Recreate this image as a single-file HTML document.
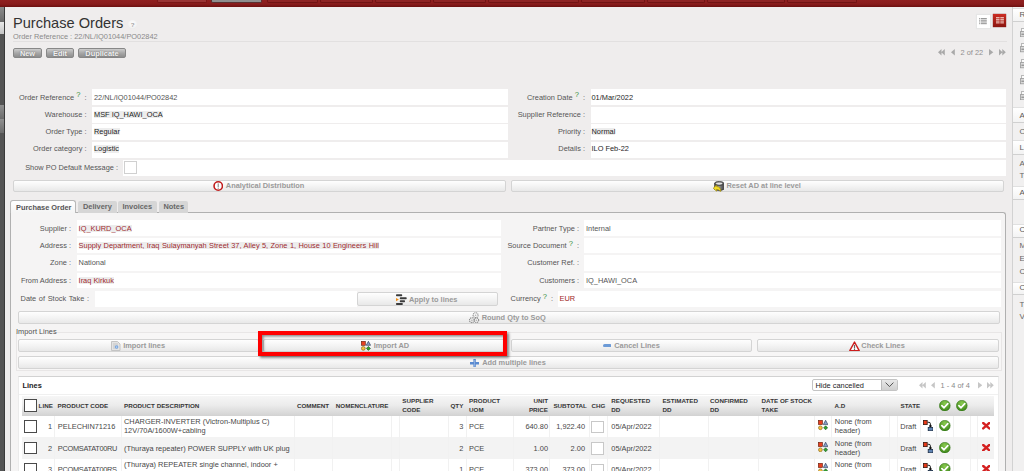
<!DOCTYPE html>
<html><head><meta charset="utf-8">
<style>
*{box-sizing:border-box;margin:0;padding:0}
html,body{width:1024px;height:471px;overflow:hidden;background:#efeded;font-family:"Liberation Sans",sans-serif;font-size:7.4px;color:#555;position:relative}
.a{position:absolute;display:block}
.t{position:absolute;white-space:nowrap;line-height:1;color:#555}
.btxt{position:absolute;white-space:nowrap;line-height:1;font-weight:bold;color:#9a9a9a;margin-top:0.7px}
.btn{position:absolute;border:1px solid #d4d4d4;border-radius:2px;background:linear-gradient(#fefefe,#f4f4f4 50%,#e8e8e8)}
.gbtn{position:absolute;border:1px solid #888;border-radius:2px;background:linear-gradient(#cdcdcd,#a8a8a8 50%,#8e8e8e);color:#f0f0f0;font-weight:bold;text-align:center;line-height:9.6px;font-size:7.4px;text-shadow:0 0 1.5px #666}
.q{color:#33903a;font-size:7.6px;position:relative;top:-2.5px;margin:0 2px 0 0}
.th{position:absolute;white-space:nowrap;line-height:1;font-weight:bold;color:#363636}
.td{position:absolute;white-space:nowrap;line-height:1;color:#474747}
.cb{width:12.5px;height:12.8px;border:1.2px solid #3c3c3c;background:#fff}
.cb2{width:12.2px;height:12.5px;border:1px solid #c8c8c8;background:#fff}
</style></head><body>
<div class="a" style="left:0px;top:0px;width:1024px;height:7px;background:linear-gradient(#902020,#881c1c 60%,#6c1010)"></div>
<div class="a" style="left:157px;top:0px;width:50px;height:2.6px;background:#9a3535;border:0.6px solid #7a1818;border-top:none;border-radius:0 0 2px 2px"></div>
<div class="a" style="left:211px;top:0px;width:51px;height:2.8px;background:#8e8e8e;border:0.6px solid #5a3030;border-top:none;border-radius:0 0 2px 2px"></div>
<div class="a" style="left:267px;top:0px;width:51px;height:2.6px;background:#8e2424;border:0.6px solid #701414;border-top:none;border-radius:0 0 2px 2px"></div>
<div class="a" style="left:320px;top:0px;width:53px;height:2.6px;background:#8e2424;border:0.6px solid #701414;border-top:none;border-radius:0 0 2px 2px"></div>
<div class="a" style="left:375px;top:0px;width:56px;height:2.6px;background:#8e2424;border:0.6px solid #701414;border-top:none;border-radius:0 0 2px 2px"></div>
<div class="a" style="left:433px;top:0px;width:53px;height:2.6px;background:#8e2424;border:0.6px solid #701414;border-top:none;border-radius:0 0 2px 2px"></div>
<div class="a" style="left:488px;top:0px;width:91px;height:2.6px;background:#8e2424;border:0.6px solid #701414;border-top:none;border-radius:0 0 2px 2px"></div>
<div class="a" style="left:581px;top:0px;width:63.5px;height:2.6px;background:#8e2424;border:0.6px solid #701414;border-top:none;border-radius:0 0 2px 2px"></div>
<div class="a" style="left:646.5px;top:0px;width:58.0px;height:2.6px;background:#8e2424;border:0.6px solid #701414;border-top:none;border-radius:0 0 2px 2px"></div>
<div class="a" style="left:706.5px;top:0px;width:78.0px;height:2.6px;background:#8e2424;border:0.6px solid #701414;border-top:none;border-radius:0 0 2px 2px"></div>
<div class="a" style="left:786.5px;top:0px;width:70.5px;height:2.6px;background:#8e2424;border:0.6px solid #701414;border-top:none;border-radius:0 0 2px 2px"></div>
<div class="a" style="left:0px;top:7px;width:3.6px;height:464px;background:#545454"></div>
<div class="a" style="left:0px;top:7px;width:3.6px;height:15px;background:linear-gradient(#8a8a8a,#6a6a6a)"></div>
<div class="a" style="left:0px;top:22px;width:3.6px;height:12px;background:linear-gradient(#e8e8e8,#c4c4c4)"></div>
<div class="a" style="left:0px;top:105.3px;width:3.6px;height:13.5px;background:linear-gradient(#909090,#6c6c6c)"></div>
<div class="a" style="left:0px;top:119.3px;width:3.6px;height:13.4px;background:linear-gradient(#909090,#6c6c6c)"></div>
<div class="a" style="left:3.6px;top:7px;width:0.9px;height:464px;background:#3a3a3a"></div>
<div class="a" style="left:1012px;top:7px;width:1px;height:464px;background:#d2d2d2"></div>
<div class="a" style="left:1013px;top:7px;width:11px;height:464px;background:#f1f0f0"></div>
<div class="a" style="left:1013px;top:7.8px;width:11px;height:14.599999999999998px;background:linear-gradient(#fff,#f3f3f3);border-top:1px solid #e0e0e0;border-bottom:1px solid #d0d0d0"></div>
<div class="t" style="left:1019.5px;top:11.33px;font-size:8px;color:#5a5a5a">R</div>
<svg class="a" style="left:1019.5px;top:27.5px" width="4.5" height="9.5" viewBox="0 0 4.5 9.5"><rect x="1.6" y="0.5" width="3" height="3.6" fill="#fafafa" stroke="#aaa" stroke-width=".8"/><rect x="0.5" y="3.6" width="4" height="5.2" fill="#d8d8d8" stroke="#999" stroke-width=".8"/><rect x="1.4" y="5.6" width="3" height="1.4" fill="#999"/></svg>
<svg class="a" style="left:1019.5px;top:43.4px" width="4.5" height="9.5" viewBox="0 0 4.5 9.5"><rect x="1.6" y="0.5" width="3" height="3.6" fill="#fafafa" stroke="#aaa" stroke-width=".8"/><rect x="0.5" y="3.6" width="4" height="5.2" fill="#d8d8d8" stroke="#999" stroke-width=".8"/><rect x="1.4" y="5.6" width="3" height="1.4" fill="#999"/></svg>
<svg class="a" style="left:1019.5px;top:59.2px" width="4.5" height="9.5" viewBox="0 0 4.5 9.5"><rect x="1.6" y="0.5" width="3" height="3.6" fill="#fafafa" stroke="#aaa" stroke-width=".8"/><rect x="0.5" y="3.6" width="4" height="5.2" fill="#d8d8d8" stroke="#999" stroke-width=".8"/><rect x="1.4" y="5.6" width="3" height="1.4" fill="#999"/></svg>
<svg class="a" style="left:1019.5px;top:75px" width="4.5" height="9.5" viewBox="0 0 4.5 9.5"><rect x="1.6" y="0.5" width="3" height="3.6" fill="#fafafa" stroke="#aaa" stroke-width=".8"/><rect x="0.5" y="3.6" width="4" height="5.2" fill="#d8d8d8" stroke="#999" stroke-width=".8"/><rect x="1.4" y="5.6" width="3" height="1.4" fill="#999"/></svg>
<svg class="a" style="left:1019.5px;top:90.8px" width="4.5" height="9.5" viewBox="0 0 4.5 9.5"><rect x="1.6" y="0.5" width="3" height="3.6" fill="#fafafa" stroke="#aaa" stroke-width=".8"/><rect x="0.5" y="3.6" width="4" height="5.2" fill="#d8d8d8" stroke="#999" stroke-width=".8"/><rect x="1.4" y="5.6" width="3" height="1.4" fill="#999"/></svg>
<div class="a" style="left:1013px;top:106.5px;width:11px;height:16.400000000000006px;background:linear-gradient(#fff,#f3f3f3);border-top:1px solid #e0e0e0;border-bottom:1px solid #d0d0d0"></div>
<div class="t" style="left:1019.5px;top:111.83px;font-size:8px;color:#5a5a5a">A</div>
<div class="t" style="left:1019.5px;top:127.53px;font-size:8px;color:#666">O</div>
<div class="a" style="left:1013px;top:140.4px;width:11px;height:14.799999999999983px;background:linear-gradient(#fff,#f3f3f3);border-top:1px solid #e0e0e0;border-bottom:1px solid #d0d0d0"></div>
<div class="t" style="left:1019.5px;top:144.13px;font-size:8px;color:#5a5a5a">L</div>
<div class="t" style="left:1019.5px;top:159.73px;font-size:8px;color:#666">A</div>
<div class="t" style="left:1019.5px;top:172.43px;font-size:8px;color:#666">T</div>
<div class="a" style="left:1013px;top:185.6px;width:11px;height:14.599999999999994px;background:linear-gradient(#fff,#f3f3f3);border-top:1px solid #e0e0e0;border-bottom:1px solid #d0d0d0"></div>
<div class="t" style="left:1019.5px;top:189.13px;font-size:8px;color:#5a5a5a">A</div>
<div class="a" style="left:1013px;top:223.5px;width:11px;height:14.0px;background:linear-gradient(#fff,#f3f3f3);border-top:1px solid #e0e0e0;border-bottom:1px solid #d0d0d0"></div>
<div class="t" style="left:1019.5px;top:226.43px;font-size:8px;color:#5a5a5a">C</div>
<div class="t" style="left:1019.5px;top:242.23px;font-size:8px;color:#666">M</div>
<div class="t" style="left:1019.5px;top:255.23px;font-size:8px;color:#666">E</div>
<div class="t" style="left:1019.5px;top:267.73px;font-size:8px;color:#666">C</div>
<div class="a" style="left:1013px;top:281.5px;width:11px;height:13.5px;background:linear-gradient(#fff,#f3f3f3);border-top:1px solid #e0e0e0;border-bottom:1px solid #d0d0d0"></div>
<div class="t" style="left:1019.5px;top:283.93px;font-size:8px;color:#5a5a5a">O</div>
<div class="t" style="left:1019.5px;top:300.63px;font-size:8px;color:#666">T</div>
<div class="t" style="left:1019.5px;top:313.03px;font-size:8px;color:#666">V</div>
<div class="t" style="left:13px;top:16.14px;font-size:14.6px;color:#333">Purchase Orders</div>
<div class="a" style="left:127.8px;top:20px;width:9.6px;height:8.8px;border-radius:50%;background:radial-gradient(circle at 50% 40%,#fdfdfd,#f2f2f2 60%,#dedede)"></div>
<div class="t" style="left:130.8px;top:21.55px;font-size:6.2px;color:#a0a0a0;font-weight:bold">?</div>
<div class="t" style="left:13px;top:32.94px;font-size:7.4px;color:#8a8a8a">Order Reference : 22/NL/IQ01044/PO02842</div>
<div class="a" style="left:13px;top:41px;width:994px;height:1px;background:#e2e0e0"></div>
<div class="gbtn" style="left:13px;top:48.1px;width:29px;height:10.4px">New</div>
<div class="gbtn" style="left:46px;top:48.1px;width:28px;height:10.4px">Edit</div>
<div class="gbtn" style="left:78px;top:48.1px;width:48px;height:10.4px">Duplicate</div>
<div class="a" style="left:976.6px;top:14.9px;width:13.3px;height:12.7px;background:#fff;box-shadow:0 0 1px 1px #e6e6e6"></div>
<svg class="a" style="left:979px;top:18px" width="8" height="7" viewBox="0 0 8 7"><rect x="0" y="0.0" width="1.2" height="1.1" fill="#aaa"/><rect x="1.8" y="0.0" width="6" height="1.1" fill="#9a9a9a"/><rect x="0" y="1.7" width="1.2" height="1.1" fill="#aaa"/><rect x="1.8" y="1.7" width="6" height="1.1" fill="#9a9a9a"/><rect x="0" y="3.4" width="1.2" height="1.1" fill="#aaa"/><rect x="1.8" y="3.4" width="6" height="1.1" fill="#9a9a9a"/><rect x="0" y="5.1" width="1.2" height="1.1" fill="#aaa"/><rect x="1.8" y="5.1" width="6" height="1.1" fill="#9a9a9a"/></svg>
<div class="a" style="left:993.2px;top:14.1px;width:13.3px;height:12.8px;background:linear-gradient(#cc2c22,#8a1510);box-shadow:0 0 1px #600"></div>
<svg class="a" style="left:996px;top:17px" width="8" height="7" viewBox="0 0 8 7"><rect x="0" y="0.0" width="3.6" height="1.2" fill="#eab8b0"/><rect x="4.3" y="0.0" width="3.6" height="1.2" fill="#eab8b0"/><rect x="0" y="1.75" width="3.6" height="1.2" fill="#eab8b0"/><rect x="4.3" y="1.75" width="3.6" height="1.2" fill="#eab8b0"/><rect x="0" y="3.5" width="3.6" height="1.2" fill="#eab8b0"/><rect x="4.3" y="3.5" width="3.6" height="1.2" fill="#eab8b0"/><rect x="0" y="5.25" width="3.6" height="1.2" fill="#eab8b0"/><rect x="4.3" y="5.25" width="3.6" height="1.2" fill="#eab8b0"/></svg>
<svg class="a" style="left:938.2px;top:49.3px" width="7" height="6.4" viewBox="0 0 7 6.4"><path d="M0 3.2 L3.5 0 V6.4Z M3.3 3.2 L6.8 0 V6.4Z" fill="#a9a9a9"/></svg>
<svg class="a" style="left:950.5px;top:49.3px" width="4" height="6.4" viewBox="0 0 4 6.4"><path d="M0 3.2 L3.8 0 V6.4Z" fill="#a9a9a9"/></svg>
<div class="t" style="left:960.5px;top:48.94px;font-size:7.4px;color:#8f8f8f">2 of 22</div>
<svg class="a" style="left:989px;top:49.3px" width="4.5" height="6.4" viewBox="0 0 4.5 6.4"><path d="M4.3 3.2 L0 0 V6.4Z" fill="#a9a9a9"/></svg>
<svg class="a" style="left:998.6px;top:49.3px" width="7" height="6.4" viewBox="0 0 7 6.4"><path d="M3.5 3.2 L0 0 V6.4Z M6.8 3.2 L3.3 0 V6.4Z" fill="#a9a9a9"/></svg>
<div class="a" style="left:92px;top:89px;width:416px;height:16px;background:#fff"></div>
<div class="a" style="left:590.5px;top:89px;width:415.5px;height:16px;background:#fff"></div>
<div class="a" style="left:92px;top:106.6px;width:416px;height:16px;background:#fff"></div>
<div class="a" style="left:590.5px;top:106.6px;width:415.5px;height:16px;background:#fff"></div>
<div class="a" style="left:92px;top:124px;width:416px;height:16px;background:#fff"></div>
<div class="a" style="left:590.5px;top:124px;width:415.5px;height:16px;background:#fff"></div>
<div class="a" style="left:92px;top:141.5px;width:416px;height:16px;background:#fff"></div>
<div class="a" style="left:590.5px;top:141.5px;width:415.5px;height:16px;background:#fff"></div>
<div class="a" style="left:123px;top:159.5px;width:883px;height:16px;background:#fff"></div>
<div class="t" style="right:937.5px;top:93.74px;font-size:7.4px;text-align:right;">Order Reference <span class="q">?</span> :</div>
<div class="t" style="right:937.5px;top:110.74px;font-size:7.4px;text-align:right;">Warehouse :</div>
<div class="t" style="right:937.5px;top:128.04px;font-size:7.4px;text-align:right;">Order Type :</div>
<div class="t" style="right:937.5px;top:145.34px;font-size:7.4px;text-align:right;">Order category :</div>
<div class="t" style="right:906px;top:163.94px;font-size:7.4px;text-align:right;">Show PO Default Message :</div>
<div class="a" style="left:124px;top:161px;width:13px;height:13px;border:1px solid #d0d0d0;background:#fff"></div>
<div class="t" style="left:94px;top:93.74px;font-size:7.4px;color:#555">22/NL/IQ01044/PO02842</div>
<div class="t" style="left:94px;top:110.74px;font-size:7.4px;color:#1e1e1e;background:#ededed">MSF IQ_HAWI_OCA</div>
<div class="t" style="left:94px;top:128.04px;font-size:7.4px;color:#1e1e1e;background:#ededed">Regular</div>
<div class="t" style="left:94px;top:145.34px;font-size:7.4px;color:#1e1e1e;background:#ededed">Logistic</div>
<div class="t" style="right:439px;top:93.74px;font-size:7.4px;text-align:right;">Creation Date <span class="q">?</span> :</div>
<div class="t" style="right:439px;top:110.74px;font-size:7.4px;text-align:right;">Supplier Reference :</div>
<div class="t" style="right:439px;top:128.04px;font-size:7.4px;text-align:right;">Priority :</div>
<div class="t" style="right:439px;top:145.34px;font-size:7.4px;text-align:right;">Details :</div>
<div class="t" style="left:591.5px;top:93.74px;font-size:7.4px;color:#1e1e1e">01/Mar/2022</div>
<div class="t" style="left:591.5px;top:128.04px;font-size:7.4px;color:#1e1e1e;background:#ededed">Normal</div>
<div class="t" style="left:591.5px;top:145.34px;font-size:7.4px;color:#1e1e1e">ILO Feb-22</div>
<div class="btn" style="left:12.5px;top:179.5px;width:493px;height:12px;"></div>
<svg class="a" style="left:212.7px;top:181px" width="10.5" height="10" viewBox="0 0 10.5 10"><circle cx="5.25" cy="5" r="4.2" fill="#fff" stroke="#c01c1c" stroke-width="1.6"/><rect x="4.6" y="2.4" width="1.3" height="3.6" fill="#999"/><rect x="4.6" y="6.6" width="1.3" height="1.2" fill="#999"/></svg>
<div class="btxt" style="left:225.8px;top:181.54px;font-size:7.4px;">Analytical Distribution</div>
<div class="btn" style="left:510.5px;top:179.5px;width:493px;height:12px;"></div>
<svg class="a" style="left:713px;top:180.8px" width="11.2" height="10.8" viewBox="0 0 11.2 10.8"><defs><linearGradient id="bn" x1="0" x2="1"><stop offset="0" stop-color="#555"/><stop offset=".45" stop-color="#9a9a9a"/><stop offset="1" stop-color="#444"/></linearGradient></defs><path d="M1.6 2.4 V8.4 Q6.2 11.2 10.8 8.4 V2.4Z" fill="url(#bn)" stroke="#333" stroke-width=".7"/><ellipse cx="6.2" cy="2.4" rx="4.6" ry="2" fill="#6a6a6a" stroke="#333" stroke-width=".7"/><ellipse cx="6.2" cy="2.6" rx="3.2" ry="1.1" fill="#e4e4e4"/><path d="M0.2 7.2 L3.6 4 V5.6 Q7.8 5.6 7.8 10.6 Q6 8.2 3.6 8.4 V10.2Z" fill="#f2dc2a" stroke="#9a8400" stroke-width=".6" stroke-linejoin="round"/></svg>
<div class="btxt" style="left:726.4px;top:181.54px;font-size:7.4px;">Reset AD at line level</div>
<div class="a" style="left:10px;top:212px;width:996px;height:260px;border:1px solid #b0b0b0;border-bottom:none;border-radius:0 3px 0 0;background:#f5f4f4"></div>
<div class="a" style="left:10.2px;top:200px;width:66.2px;height:13.2px;border:1px solid #b8b8b8;border-bottom:none;border-radius:3px 3px 0 0;background:linear-gradient(#fff,#f4f4f4)"></div>
<div class="a" style="left:77.5px;top:201px;width:39px;height:11.6px;border-radius:2px 2px 0 0;background:#d6d6d6"></div>
<div class="a" style="left:118px;top:201px;width:38.6px;height:11.6px;border-radius:2px 2px 0 0;background:#d6d6d6"></div>
<div class="a" style="left:158.6px;top:201px;width:29.4px;height:11.6px;border-radius:2px 2px 0 0;background:#d6d6d6"></div>
<div class="btxt" style="left:16px;top:203.04px;font-size:7.4px;color:#555">Purchase Order</div>
<div class="btxt" style="left:83px;top:201.94px;font-size:7.4px;color:#666">Delivery</div>
<div class="btxt" style="left:122.5px;top:201.94px;font-size:7.4px;color:#666">Invoices</div>
<div class="btxt" style="left:163.5px;top:201.94px;font-size:7.4px;color:#666">Notes</div>
<div class="a" style="left:76.5px;top:220px;width:424px;height:15.5px;background:#fff"></div>
<div class="a" style="left:584.2px;top:220px;width:416.5px;height:15.5px;background:#fff"></div>
<div class="a" style="left:76.5px;top:237.6px;width:424px;height:15.5px;background:#fff"></div>
<div class="a" style="left:584.2px;top:237.6px;width:416.5px;height:15.5px;background:#fff"></div>
<div class="a" style="left:76.5px;top:255px;width:424px;height:15.5px;background:#fff"></div>
<div class="a" style="left:584.2px;top:255px;width:416.5px;height:15.5px;background:#fff"></div>
<div class="a" style="left:76.5px;top:272.5px;width:424px;height:15.5px;background:#fff"></div>
<div class="a" style="left:584.2px;top:272.5px;width:416.5px;height:15.5px;background:#fff"></div>
<div class="a" style="left:94.7px;top:290.6px;width:262px;height:16px;background:#fff"></div>
<div class="a" style="left:557.6px;top:290.6px;width:443px;height:16px;background:#fff"></div>
<div class="t" style="right:953px;top:224.74px;font-size:7.4px;text-align:right;">Supplier :</div>
<div class="t" style="right:953px;top:242.04px;font-size:7.4px;text-align:right;">Address :</div>
<div class="t" style="right:953px;top:259.14px;font-size:7.4px;text-align:right;">Zone :</div>
<div class="t" style="right:953px;top:276.74px;font-size:7.4px;text-align:right;">From Address :</div>
<div class="t" style="right:935px;top:294.64px;font-size:7.4px;text-align:right;word-spacing:0.6px">Date of Stock Take :</div>
<div class="t" style="left:78.6px;top:224.74px;font-size:7.4px;color:#9e2a2e;background:#ededed">IQ_KURD_OCA</div>
<div class="t" style="left:78.6px;top:242.04px;font-size:7.4px;color:#9e2a2e;background:#ededed;word-spacing:0.38px">Supply Department, Iraq Sulaymanyah Street 37, Alley 5, Zone 1, House 10 Engineers Hill</div>
<div class="t" style="left:78.6px;top:259.14px;font-size:7.4px;color:#555">National</div>
<div class="t" style="left:78.6px;top:276.74px;font-size:7.4px;color:#9e2a2e;background:#ededed">Iraq Kirkuk</div>
<div class="t" style="right:445px;top:224.74px;font-size:7.4px;text-align:right;">Partner Type :</div>
<div class="t" style="right:445px;top:242.04px;font-size:7.4px;text-align:right;">Source Document <span class="q">?</span> :</div>
<div class="t" style="right:445px;top:259.14px;font-size:7.4px;text-align:right;">Customer Ref. :</div>
<div class="t" style="right:445px;top:276.74px;font-size:7.4px;text-align:right;">Customers :</div>
<div class="t" style="left:586px;top:224.74px;font-size:7.4px;color:#555">Internal</div>
<div class="t" style="left:586px;top:276.74px;font-size:7.4px;color:#555">IQ_HAWI_OCA</div>
<div class="btn" style="left:356.6px;top:292.3px;width:141.2px;height:13.5px;"></div>
<svg class="a" style="left:396px;top:293.6px" width="11" height="11" viewBox="0 0 11 11"><rect x="0" y="0.2" width="6.2" height="2" rx=".7" fill="#3c3c3c"/><rect x="3.8" y="3.2" width="6.9" height="2.1" rx=".7" fill="#3c3c3c"/><rect x="3.8" y="6.2" width="5.2" height="2" rx=".7" fill="#3c3c3c"/><rect x="0" y="8.9" width="6.8" height="2" rx=".7" fill="#3c3c3c"/><path d="M0 3.9 L2.9 5.6 L0 7.3Z" fill="#f29018"/></svg>
<div class="btxt" style="left:409px;top:295.24px;font-size:7.4px;">Apply to lines</div>
<div class="t" style="right:471px;top:295.04px;font-size:7.4px;text-align:right;">Currency <span class="q">?</span> :</div>
<div class="t" style="left:559.6px;top:295.04px;font-size:7.4px;color:#a01e24">EUR</div>
<div class="btn" style="left:17.6px;top:310.8px;width:982px;height:12.8px;"></div>
<svg class="a" style="left:469px;top:312px" width="10.5" height="11.5" viewBox="0 0 10.5 11.5"><g fill="none" stroke="#8a8a8a" stroke-width="1.1" stroke-dasharray="1.1 .6"><circle cx="6.6" cy="3.2" r="2.5"/><circle cx="2.9" cy="8.2" r="2.4"/><circle cx="7.4" cy="8.2" r="2.3"/></g><g fill="#b0b0b0"><circle cx="6.6" cy="3.2" r=".8"/><circle cx="2.9" cy="8.2" r=".8"/><circle cx="7.4" cy="8.2" r=".8"/></g></svg>
<div class="btxt" style="left:481.7px;top:313.44px;font-size:7.4px;">Round Qty to SoQ</div>
<div class="a" style="left:15.5px;top:332.2px;width:986px;height:38.8px;border:1px solid #e8e6e6;background:#f7f6f6"></div>
<div class="a" style="left:15px;top:328px;width:38px;height:4.5px;background:#f5f4f4"></div>
<div class="t" style="left:16px;top:327.94px;font-size:7.4px;color:#505050">Import Lines</div>
<div class="btn" style="left:18px;top:339.3px;width:241px;height:12.5px;"></div>
<div class="btn" style="left:263px;top:339.3px;width:242px;height:12.5px;"></div>
<div class="btn" style="left:510.8px;top:339.3px;width:241px;height:12.5px;"></div>
<div class="btn" style="left:756.5px;top:339.3px;width:242.5px;height:12.5px;"></div>
<svg class="a" style="left:111px;top:340.8px" width="9.5" height="10" viewBox="0 0 9.5 10"><path d="M0.5 0.5 H6.5 L9 3 V9.5 H0.5Z" fill="#e4e4e4" stroke="#c4c4c4" stroke-width="1"/><rect x="2" y="2" width="5" height="6" fill="#d4d4d4"/><circle cx="5.6" cy="6" r="1.8" fill="#7aa8e0"/><circle cx="5.6" cy="6" r=".6" fill="#e8f0ff"/></svg>
<div class="btxt" style="left:123.2px;top:341.34px;font-size:7.4px;">Import lines</div>
<svg class="a" style="left:360.8px;top:340.6px" width="10" height="10" viewBox="0 0 10 10"><rect x="0.3" y="0.3" width="4" height="4" fill="#e84020" stroke="#602010" stroke-width=".6"/><path d="M7.4 0.3 L9.6 4.3 H5.2Z" fill="#8aa0c8" stroke="#203050" stroke-width=".6"/><circle cx="2.3" cy="7.4" r="1.9" fill="#f4c040" stroke="#806010" stroke-width=".6"/><path d="M7.4 5.4 L9.4 7.4 L7.4 9.4 L5.4 7.4Z" fill="#30a030" stroke="#105010" stroke-width=".6"/></svg>
<div class="btxt" style="left:373.7px;top:341.34px;font-size:7.4px;">Import AD</div>
<svg class="a" style="left:602.5px;top:344px" width="8.6" height="3.2" viewBox="0 0 8.6 3.2"><rect x="0" y="0" width="8.6" height="3.2" rx="1.6" fill="#6c9ad6"/></svg>
<div class="btxt" style="left:614.2px;top:341.34px;font-size:7.4px;">Cancel Lines</div>
<svg class="a" style="left:848.5px;top:340.5px" width="11" height="10.5" viewBox="0 0 11 10.5"><path d="M5.5 1 L10.2 9.6 H0.8Z" fill="#fff" stroke="#cc1c1c" stroke-width="1.4" stroke-linejoin="round"/><rect x="4.9" y="3.8" width="1.2" height="3.8" fill="#666"/><rect x="4.9" y="8" width="1.2" height="1" fill="#666"/></svg>
<div class="btxt" style="left:861.3px;top:341.34px;font-size:7.4px;">Check Lines</div>
<div class="btn" style="left:18px;top:356.4px;width:981px;height:12.3px;"></div>
<svg class="a" style="left:469.8px;top:359px" width="9.2" height="8.4" viewBox="0 0 9.2 8.4"><path d="M3.4 0 H5.8 V3 H9.2 V5.4 H5.8 V8.4 H3.4 V5.4 H0 V3 H3.4Z" fill="#5a8ad0"/><rect x="4.3" y="0.8" width=".6" height="6.8" fill="#a8c4ec"/></svg>
<div class="btxt" style="left:482.2px;top:358.34px;font-size:7.4px;">Add multiple lines</div>
<div class="a" style="left:258.1px;top:331px;width:248.9px;height:25.3px;border:4.9px solid #ff0000;box-shadow:1.5px 1.5px 2.5px rgba(0,0,0,.45),inset 1.5px 1.5px 2.5px rgba(0,0,0,.45)"></div>
<div class="a" style="left:17.7px;top:376px;width:981px;height:100px;border:1px solid #ebebeb;border-top-color:#d2d2d2;background:#fff"></div>
<div class="a" style="left:18.7px;top:394px;width:979px;height:1px;background:#f0f0f0"></div>
<div class="t" style="left:22.5px;top:382.04px;font-size:7.4px;color:#222;font-weight:bold">Lines</div>
<div class="a" style="left:812px;top:378.8px;width:85.5px;height:12.5px;border:1px solid #c4c4c4;border-radius:2px;background:#fff"></div>
<div class="a" style="left:881px;top:379.8px;width:15.5px;height:10.5px;background:linear-gradient(#e8e8e8,#d0d0d0);border-left:1px solid #bbb"></div>
<svg class="a" style="left:884.5px;top:382.3px" width="9" height="5.5" viewBox="0 0 9 5.5"><path d="M0.6 0.6 L4.5 4.6 L8.4 0.6" fill="none" stroke="#555" stroke-width="1"/></svg>
<div class="t" style="left:815.5px;top:381.54px;font-size:7.4px;color:#222">Hide cancelled</div>
<svg class="a" style="left:919px;top:382.3px" width="7" height="6.4" viewBox="0 0 7 6.4"><path d="M0 3.2 L3.5 0 V6.4Z M3.3 3.2 L6.8 0 V6.4Z" fill="#c6c6c6"/></svg>
<svg class="a" style="left:931px;top:382.3px" width="4" height="6.4" viewBox="0 0 4 6.4"><path d="M0 3.2 L3.8 0 V6.4Z" fill="#c6c6c6"/></svg>
<div class="t" style="left:940.6px;top:381.94px;font-size:7.4px;color:#8a8a8a">1 - 4 of 4</div>
<svg class="a" style="left:977.5px;top:382.3px" width="4.5" height="6.4" viewBox="0 0 4.5 6.4"><path d="M4.3 3.2 L0 0 V6.4Z" fill="#c6c6c6"/></svg>
<svg class="a" style="left:987px;top:382.3px" width="7" height="6.4" viewBox="0 0 7 6.4"><path d="M3.5 3.2 L0 0 V6.4Z M6.8 3.2 L3.3 0 V6.4Z" fill="#c6c6c6"/></svg><svg class="a" style="left:0;top:0" width="0" height="0"><defs><radialGradient id="okg" cx="50%" cy="30%" r="70%"><stop offset="0" stop-color="#8ccc50"/><stop offset="1" stop-color="#3a8418"/></radialGradient></defs></svg>
<div class="a" style="left:22px;top:396px;width:972.4px;height:19.80000000000001px;background:linear-gradient(#f6f6f6,#ececec 45%,#d2d2d2)"></div>
<div class="a" style="left:22px;top:415.8px;width:972.4px;height:21.5px;background:#fff"></div>
<div class="a" style="left:22px;top:437.4px;width:972.4px;height:21.5px;background:#f3f3f3"></div>
<div class="a" style="left:22px;top:458.8px;width:972.4px;height:21.5px;background:#fff"></div>
<div class="a" style="left:54.3px;top:415.8px;width:1px;height:60px;background:#f1f1f1"></div>
<div class="a" style="left:120.7px;top:415.8px;width:1px;height:60px;background:#f1f1f1"></div>
<div class="a" style="left:294px;top:415.8px;width:1px;height:60px;background:#f1f1f1"></div>
<div class="a" style="left:332px;top:415.8px;width:1px;height:60px;background:#f1f1f1"></div>
<div class="a" style="left:390.6px;top:415.8px;width:1px;height:60px;background:#f1f1f1"></div>
<div class="a" style="left:399px;top:415.8px;width:1px;height:60px;background:#f1f1f1"></div>
<div class="a" style="left:448.3px;top:415.8px;width:1px;height:60px;background:#f1f1f1"></div>
<div class="a" style="left:465.8px;top:415.8px;width:1px;height:60px;background:#f1f1f1"></div>
<div class="a" style="left:513px;top:415.8px;width:1px;height:60px;background:#f1f1f1"></div>
<div class="a" style="left:549px;top:415.8px;width:1px;height:60px;background:#f1f1f1"></div>
<div class="a" style="left:588.6px;top:415.8px;width:1px;height:60px;background:#f1f1f1"></div>
<div class="a" style="left:607.3px;top:415.8px;width:1px;height:60px;background:#f1f1f1"></div>
<div class="a" style="left:659.4px;top:415.8px;width:1px;height:60px;background:#f1f1f1"></div>
<div class="a" style="left:707.5px;top:415.8px;width:1px;height:60px;background:#f1f1f1"></div>
<div class="a" style="left:757.8px;top:415.8px;width:1px;height:60px;background:#f1f1f1"></div>
<div class="a" style="left:814.1px;top:415.8px;width:1px;height:60px;background:#f1f1f1"></div>
<div class="a" style="left:831.1px;top:415.8px;width:1px;height:60px;background:#f1f1f1"></div>
<div class="a" style="left:889px;top:415.8px;width:1px;height:60px;background:#f1f1f1"></div>
<div class="a" style="left:896.9px;top:415.8px;width:1px;height:60px;background:#f1f1f1"></div>
<div class="a" style="left:920.4px;top:415.8px;width:1px;height:60px;background:#f1f1f1"></div>
<div class="a" style="left:936.4px;top:415.8px;width:1px;height:60px;background:#f1f1f1"></div>
<div class="a" style="left:953.3px;top:415.8px;width:1px;height:60px;background:#f1f1f1"></div>
<div class="a" style="left:969.7px;top:415.8px;width:1px;height:60px;background:#f1f1f1"></div>
<div class="a" style="left:977.3px;top:415.8px;width:1px;height:60px;background:#f1f1f1"></div>
<div class="a" style="left:24.2px;top:399px;width:12.8px;height:12.8px;border:1.1px solid #4a4a4a;background:#fff"></div>
<div class="th" style="left:38.6px;top:402.91px;font-size:6.25px;">LINE</div>
<div class="th" style="left:57.6px;top:402.91px;font-size:6.25px;">PRODUCT CODE</div>
<div class="th" style="left:124px;top:402.91px;font-size:6.25px;">PRODUCT DESCRIPTION</div>
<div class="th" style="left:296.9px;top:402.91px;font-size:6.25px;">COMMENT</div>
<div class="th" style="left:335.8px;top:402.91px;font-size:6.25px;">NOMENCLATURE</div>
<div class="th" style="left:402.3px;top:398.31px;font-size:6.25px;">SUPPLIER</div>
<div class="th" style="left:402.3px;top:407.01px;font-size:6.25px;">CODE</div>
<div class="th" style="right:560.7px;top:402.91px;font-size:6.25px;text-align:right;">QTY</div>
<div class="th" style="left:469.1px;top:398.31px;font-size:6.25px;">PRODUCT</div>
<div class="th" style="left:469.1px;top:407.01px;font-size:6.25px;">UOM</div>
<div class="th" style="right:476px;top:398.31px;font-size:6.25px;text-align:right;">UNIT</div>
<div class="th" style="right:476px;top:407.01px;font-size:6.25px;text-align:right;">PRICE</div>
<div class="th" style="left:553.4px;top:402.91px;font-size:6.25px;">SUBTOTAL</div>
<div class="th" style="left:591.4px;top:402.91px;font-size:6.25px;">CHG</div>
<div class="th" style="left:611.3px;top:398.31px;font-size:6.25px;">REQUESTED</div>
<div class="th" style="left:611.3px;top:407.01px;font-size:6.25px;">DD</div>
<div class="th" style="left:662.4px;top:398.31px;font-size:6.25px;">ESTIMATED</div>
<div class="th" style="left:662.4px;top:407.01px;font-size:6.25px;">DD</div>
<div class="th" style="left:710px;top:398.31px;font-size:6.25px;">CONFIRMED</div>
<div class="th" style="left:710px;top:407.01px;font-size:6.25px;">DD</div>
<div class="th" style="left:761.6px;top:398.31px;font-size:6.25px;">DATE OF STOCK</div>
<div class="th" style="left:761.6px;top:407.01px;font-size:6.25px;">TAKE</div>
<div class="th" style="left:834.4px;top:402.91px;font-size:6.25px;">A.D</div>
<div class="th" style="left:900.6px;top:402.91px;font-size:6.25px;">STATE</div>
<svg class="a" style="left:939.3px;top:399.6px" width="11.6" height="11.3" viewBox="0 0 11.6 11.3"><circle cx="5.8" cy="5.65" r="5.4" fill="url(#okg)" stroke="#2e6e14" stroke-width=".5"/><path d="M2.9 5.7 L5 7.8 L8.8 3.6" fill="none" stroke="#fff" stroke-width="1.7" stroke-linecap="round" stroke-linejoin="round"/></svg>
<svg class="a" style="left:956px;top:399.6px" width="11.6" height="11.3" viewBox="0 0 11.6 11.3"><circle cx="5.8" cy="5.65" r="5.4" fill="url(#okg)" stroke="#2e6e14" stroke-width=".5"/><path d="M2.9 5.7 L5 7.8 L8.8 3.6" fill="none" stroke="#fff" stroke-width="1.7" stroke-linecap="round" stroke-linejoin="round"/></svg>
<div class="a" style="left:24.2px;top:420.0px;width:12.8px;height:12.8px;border:1.1px solid #4a4a4a;background:#fff"></div>
<div class="td" style="right:971.8px;top:422.94px;font-size:7.4px;text-align:right;">1</div>
<div class="td" style="left:57.8px;top:422.94px;font-size:7.4px;">PELECHIN71216</div>
<div class="td" style="left:124px;top:418.24px;font-size:7.4px;">CHARGER-INVERTER (Victron-Multiplus C)</div>
<div class="td" style="left:124px;top:427.14px;font-size:7.4px;">12V/70A/1600W+cabling</div>
<div class="td" style="right:560.7px;top:422.94px;font-size:7.4px;text-align:right;">3</div>
<div class="td" style="left:469.1px;top:422.94px;font-size:7.4px;">PCE</div>
<div class="td" style="right:476px;top:422.94px;font-size:7.4px;text-align:right;">640.80</div>
<div class="td" style="right:439px;top:422.94px;font-size:7.4px;text-align:right;">1,922.40</div>
<div class="a" style="left:591.4px;top:420.5px;width:12.2px;height:12.5px;border:1px solid #c8c8c8;background:#fff"></div>
<div class="td" style="left:611.3px;top:422.94px;font-size:7.4px;">05/Apr/2022</div>
<svg class="a" style="left:817.8px;top:420.0px" width="10.5" height="10.5" viewBox="0 0 10.5 10.5"><rect x="0.3" y="0.3" width="4.2" height="4.3" fill="#e84020" stroke="#602010" stroke-width=".6"/><path d="M7.6 0.2 L9.9 4.6 H5.3Z" fill="#8aa0c8" stroke="#203050" stroke-width=".6"/><circle cx="2.4" cy="7.8" r="1.9" fill="#f4c040" stroke="#806010" stroke-width=".6"/><path d="M7.6 5.8 L9.6 7.8 L7.6 9.8 L5.6 7.8Z" fill="#30a030" stroke="#105010" stroke-width=".6"/></svg>
<div class="td" style="left:834.8px;top:418.24px;font-size:7.4px;">None (from</div>
<div class="td" style="left:834.8px;top:427.14px;font-size:7.4px;">header)</div>
<div class="td" style="left:900.3px;top:422.94px;font-size:7.4px;">Draft</div>
<svg class="a" style="left:922.8px;top:420.2px" width="10.5" height="11" viewBox="0 0 10.5 11"><rect x="0.4" y="0.4" width="3.8" height="4.2" fill="#e83a18" stroke="#3a1a10" stroke-width=".8"/><path d="M4.6 2.3 H6 Q7.4 2.3 7.4 3.8 V5.6" fill="none" stroke="#222" stroke-width="1"/><circle cx="7.4" cy="6" r="1.2" fill="#111"/><rect x="5.2" y="7.4" width="4.8" height="3.4" fill="#5f84b4" stroke="#1a2a40" stroke-width=".8"/></svg>
<svg class="a" style="left:939.3px;top:420.0px" width="11.6" height="11.3" viewBox="0 0 11.6 11.3"><circle cx="5.8" cy="5.65" r="5.4" fill="url(#okg)" stroke="#2e6e14" stroke-width=".5"/><path d="M2.9 5.7 L5 7.8 L8.8 3.6" fill="none" stroke="#fff" stroke-width="1.7" stroke-linecap="round" stroke-linejoin="round"/></svg>
<svg class="a" style="left:981.5px;top:422.3px" width="8.5" height="7.4" viewBox="0 0 8.5 7.4"><path d="M1.2 1 L7.3 6.4 M7.3 1 L1.2 6.4" stroke="#d42020" stroke-width="2.4" stroke-linecap="round"/></svg>
<div class="a" style="left:24.2px;top:441.59999999999997px;width:12.8px;height:12.8px;border:1.1px solid #4a4a4a;background:#fff"></div>
<div class="td" style="right:971.8px;top:444.54px;font-size:7.4px;text-align:right;">2</div>
<div class="td" style="left:57.8px;top:444.54px;font-size:7.4px;letter-spacing:-0.3px">PCOMSATAT00RU</div>
<div class="td" style="left:124px;top:444.54px;font-size:7.4px;">(Thuraya repeater) POWER SUPPLY with UK plug</div>
<div class="td" style="right:560.7px;top:444.54px;font-size:7.4px;text-align:right;">2</div>
<div class="td" style="left:469.1px;top:444.54px;font-size:7.4px;">PCE</div>
<div class="td" style="right:476px;top:444.54px;font-size:7.4px;text-align:right;">1.00</div>
<div class="td" style="right:439px;top:444.54px;font-size:7.4px;text-align:right;">2.00</div>
<div class="a" style="left:591.4px;top:442.09999999999997px;width:12.2px;height:12.5px;border:1px solid #c8c8c8;background:#fff"></div>
<div class="td" style="left:611.3px;top:444.54px;font-size:7.4px;">05/Apr/2022</div>
<svg class="a" style="left:817.8px;top:441.59999999999997px" width="10.5" height="10.5" viewBox="0 0 10.5 10.5"><rect x="0.3" y="0.3" width="4.2" height="4.3" fill="#e84020" stroke="#602010" stroke-width=".6"/><path d="M7.6 0.2 L9.9 4.6 H5.3Z" fill="#8aa0c8" stroke="#203050" stroke-width=".6"/><circle cx="2.4" cy="7.8" r="1.9" fill="#f4c040" stroke="#806010" stroke-width=".6"/><path d="M7.6 5.8 L9.6 7.8 L7.6 9.8 L5.6 7.8Z" fill="#30a030" stroke="#105010" stroke-width=".6"/></svg>
<div class="td" style="left:834.8px;top:439.84px;font-size:7.4px;">None (from</div>
<div class="td" style="left:834.8px;top:448.74px;font-size:7.4px;">header)</div>
<div class="td" style="left:900.3px;top:444.54px;font-size:7.4px;">Draft</div>
<svg class="a" style="left:922.8px;top:441.79999999999995px" width="10.5" height="11" viewBox="0 0 10.5 11"><rect x="0.4" y="0.4" width="3.8" height="4.2" fill="#e83a18" stroke="#3a1a10" stroke-width=".8"/><path d="M4.6 2.3 H6 Q7.4 2.3 7.4 3.8 V5.6" fill="none" stroke="#222" stroke-width="1"/><circle cx="7.4" cy="6" r="1.2" fill="#111"/><rect x="5.2" y="7.4" width="4.8" height="3.4" fill="#5f84b4" stroke="#1a2a40" stroke-width=".8"/></svg>
<svg class="a" style="left:939.3px;top:441.59999999999997px" width="11.6" height="11.3" viewBox="0 0 11.6 11.3"><circle cx="5.8" cy="5.65" r="5.4" fill="url(#okg)" stroke="#2e6e14" stroke-width=".5"/><path d="M2.9 5.7 L5 7.8 L8.8 3.6" fill="none" stroke="#fff" stroke-width="1.7" stroke-linecap="round" stroke-linejoin="round"/></svg>
<svg class="a" style="left:981.5px;top:443.9px" width="8.5" height="7.4" viewBox="0 0 8.5 7.4"><path d="M1.2 1 L7.3 6.4 M7.3 1 L1.2 6.4" stroke="#d42020" stroke-width="2.4" stroke-linecap="round"/></svg>
<div class="a" style="left:24.2px;top:463.0px;width:12.8px;height:12.8px;border:1.1px solid #4a4a4a;background:#fff"></div>
<div class="td" style="right:971.8px;top:465.94px;font-size:7.4px;text-align:right;">3</div>
<div class="td" style="left:57.8px;top:465.94px;font-size:7.4px;letter-spacing:-0.3px">PCOMSATAT00RS</div>
<div class="td" style="left:124px;top:461.24px;font-size:7.4px;">(Thuraya) REPEATER single channel, indoor +</div>
<div class="td" style="left:124px;top:470.14px;font-size:7.4px;">outdoor antenna</div>
<div class="td" style="right:560.7px;top:465.94px;font-size:7.4px;text-align:right;">1</div>
<div class="td" style="left:469.1px;top:465.94px;font-size:7.4px;">PCE</div>
<div class="td" style="right:476px;top:465.94px;font-size:7.4px;text-align:right;">373.00</div>
<div class="td" style="right:439px;top:465.94px;font-size:7.4px;text-align:right;">373.00</div>
<div class="a" style="left:591.4px;top:463.5px;width:12.2px;height:12.5px;border:1px solid #c8c8c8;background:#fff"></div>
<div class="td" style="left:611.3px;top:465.94px;font-size:7.4px;">05/Apr/2022</div>
<svg class="a" style="left:817.8px;top:463.0px" width="10.5" height="10.5" viewBox="0 0 10.5 10.5"><rect x="0.3" y="0.3" width="4.2" height="4.3" fill="#e84020" stroke="#602010" stroke-width=".6"/><path d="M7.6 0.2 L9.9 4.6 H5.3Z" fill="#8aa0c8" stroke="#203050" stroke-width=".6"/><circle cx="2.4" cy="7.8" r="1.9" fill="#f4c040" stroke="#806010" stroke-width=".6"/><path d="M7.6 5.8 L9.6 7.8 L7.6 9.8 L5.6 7.8Z" fill="#30a030" stroke="#105010" stroke-width=".6"/></svg>
<div class="td" style="left:834.8px;top:461.24px;font-size:7.4px;">None (from</div>
<div class="td" style="left:834.8px;top:470.14px;font-size:7.4px;">header)</div>
<div class="td" style="left:900.3px;top:465.94px;font-size:7.4px;">Draft</div>
<svg class="a" style="left:922.8px;top:463.2px" width="10.5" height="11" viewBox="0 0 10.5 11"><rect x="0.4" y="0.4" width="3.8" height="4.2" fill="#e83a18" stroke="#3a1a10" stroke-width=".8"/><path d="M4.6 2.3 H6 Q7.4 2.3 7.4 3.8 V5.6" fill="none" stroke="#222" stroke-width="1"/><circle cx="7.4" cy="6" r="1.2" fill="#111"/><rect x="5.2" y="7.4" width="4.8" height="3.4" fill="#5f84b4" stroke="#1a2a40" stroke-width=".8"/></svg>
<svg class="a" style="left:939.3px;top:463.0px" width="11.6" height="11.3" viewBox="0 0 11.6 11.3"><circle cx="5.8" cy="5.65" r="5.4" fill="url(#okg)" stroke="#2e6e14" stroke-width=".5"/><path d="M2.9 5.7 L5 7.8 L8.8 3.6" fill="none" stroke="#fff" stroke-width="1.7" stroke-linecap="round" stroke-linejoin="round"/></svg>
<svg class="a" style="left:981.5px;top:465.3px" width="8.5" height="7.4" viewBox="0 0 8.5 7.4"><path d="M1.2 1 L7.3 6.4 M7.3 1 L1.2 6.4" stroke="#d42020" stroke-width="2.4" stroke-linecap="round"/></svg></body></html>
